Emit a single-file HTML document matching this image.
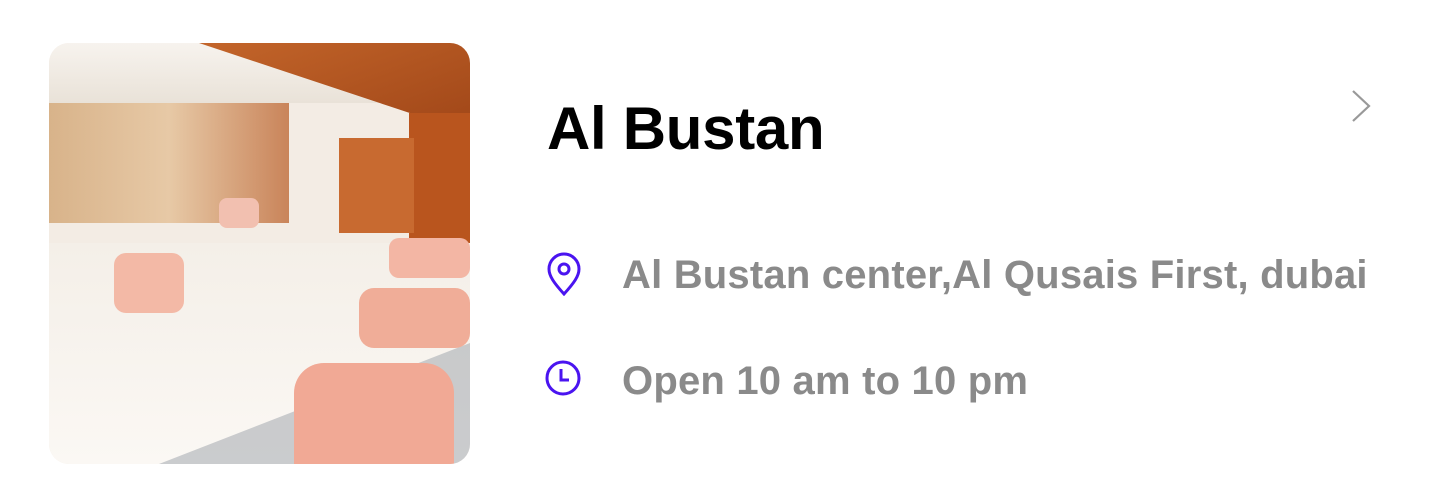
<!DOCTYPE html>
<html><head><style>
body{margin:0;width:1440px;height:500px;background:#fff;position:relative;overflow:hidden;font-family:"Liberation Sans",sans-serif}
.img{position:absolute;left:49px;top:43px;width:421px;height:421px;border-radius:20px;overflow:hidden;background:#f3ece4}
.img div{position:absolute}
h1{position:absolute;left:547px;top:94px;margin:0;font-size:60px;font-weight:bold;color:#000;letter-spacing:-0.3px}
.t{position:absolute;left:622px;font-size:40px;color:#8a8a8a;font-weight:bold;white-space:nowrap;letter-spacing:0.2px}
</style></head><body>
<div class="img">
<div style="left:0;top:0;width:421px;height:60px;background:linear-gradient(#f7f3ee,#e9e2d8)"></div>
<div style="left:150px;top:0;width:271px;height:90px;background:linear-gradient(160deg,#c3652a,#a04618);clip-path:polygon(0 0,100% 0,100% 100%,70% 70%,30% 30%)"></div>
<div style="left:360px;top:70px;width:61px;height:160px;background:#b9551e"></div>
<div style="left:290px;top:95px;width:75px;height:95px;background:#c86a30"></div>
<div style="left:0;top:60px;width:240px;height:120px;background:linear-gradient(90deg,#d8b38a,#e7c9a6,#c9845a)"></div>
<div style="left:0;top:200px;width:421px;height:221px;background:linear-gradient(#f4efe8,#fbf8f4)"></div>
<div style="left:110px;top:300px;width:311px;height:121px;background:#9aa0a8;opacity:.5;clip-path:polygon(100% 0,100% 100%,0 100%)"></div>
<div style="left:65px;top:210px;width:70px;height:60px;background:#f3b9a6;border-radius:12px"></div>
<div style="left:245px;top:320px;width:160px;height:101px;background:#f1a995;border-radius:30px 30px 0 0"></div>
<div style="left:310px;top:245px;width:111px;height:60px;background:#f0ad98;border-radius:15px"></div>
<div style="left:340px;top:195px;width:81px;height:40px;background:#f3b6a4;border-radius:10px"></div>
<div style="left:170px;top:155px;width:40px;height:30px;background:#f2c0b0;border-radius:8px"></div>
</div>
<h1>Al Bustan</h1>
<svg style="position:absolute;left:1348px;top:88px" width="26" height="36" viewBox="0 0 26 36"><path d="M5 3 L21 18 L5 33" fill="none" stroke="#999" stroke-width="2.2"/></svg>
<svg style="position:absolute;left:544px;top:252px" width="40" height="44" viewBox="0 0 40 44"><path d="M20 42 C10 31 5 24 5 17 A15 15 0 0 1 35 17 C35 24 30 31 20 42Z" fill="none" stroke="#4a14f0" stroke-width="3"/><circle cx="20" cy="17" r="5" fill="none" stroke="#4a14f0" stroke-width="3"/></svg>
<div class="t" style="top:253px">Al Bustan center,Al Qusais First, dubai</div>
<svg style="position:absolute;left:543px;top:358px" width="40" height="40" viewBox="0 0 40 40"><circle cx="20" cy="20" r="16" fill="none" stroke="#4a14f0" stroke-width="3"/><path d="M18 11 V22 H26" fill="none" stroke="#4a14f0" stroke-width="3"/></svg>
<div class="t" style="top:359px">Open 10 am to 10 pm</div>
</body></html>
